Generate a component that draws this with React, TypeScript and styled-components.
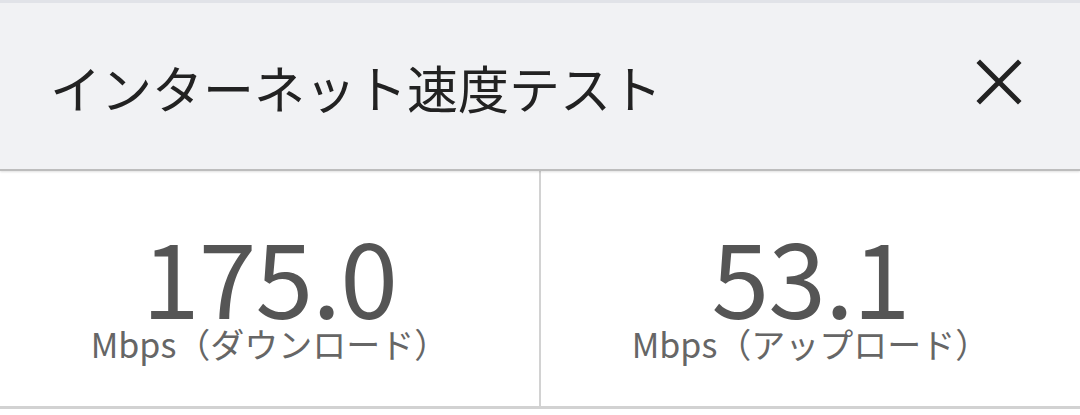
import React from "react";
import styled, { createGlobalStyle } from "styled-components";

const Global = createGlobalStyle`
  html, body { margin: 0; padding: 0; background: #ffffff; }
  body { font-family: "Noto Sans CJK JP", "Noto Sans", sans-serif; }
`;

const Page = styled.div`
  width: 1080px;
  height: 415px;
  background: #ffffff;
  overflow: hidden;
`;

const Header = styled.header`
  box-sizing: border-box;
  height: 171px;
  background: #f1f2f4;
  border-top: 3px solid #e1e3e8;
  border-bottom: 2px solid #bdbdbd;
  box-shadow: 0 1px 2px rgba(0, 0, 0, 0.12);
  display: flex;
  align-items: center;
  justify-content: space-between;
  padding: 0 57px 0 50px;
  position: relative;
  z-index: 1;
`;

const Title = styled.h1`
  margin: 0;
  font-size: 51px;
  font-weight: 400;
  color: #222222;
  line-height: 1;
  padding-top: 2px;
`;

const CloseButton = styled.button`
  border: 0;
  background: transparent;
  padding: 0;
  width: 48px;
  height: 48px;
  display: flex;
  align-items: center;
  justify-content: center;
  cursor: pointer;
  margin-top: -8px;
`;

const Stats = styled.div`
  box-sizing: border-box;
  display: grid;
  grid-template-columns: 541px 1fr;
  height: 238px;
  border-bottom: 3px solid #d2d2d2;
`;

const StatCell = styled.div<{ $divider?: boolean }>`
  box-sizing: border-box;
  display: flex;
  flex-direction: column;
  align-items: center;
  justify-content: center;
  padding-top: 18px;
  border-right: ${(p) => (p.$divider ? "2px solid #d2d2d2" : "none")};
`;

const Value = styled.div`
  font-size: 104px;
  letter-spacing: -1px;
  line-height: 80px;
  color: #555555;
  font-weight: 400;
`;

const Unit = styled.div`
  font-size: 34px;
  line-height: 36px;
  color: #666666;
  margin-top: 12px;
`;

const CloseIcon = () => (
  <svg width="46" height="46" viewBox="0 0 46 46" aria-hidden="true">
    <path d="M4 4 L42 42 M42 4 L4 42" stroke="#222222" strokeWidth="5" strokeLinecap="square" />
  </svg>
);

export default function App() {
  return (
    <Page>
      <Global />
      <Header>
        <Title>インターネット速度テスト</Title>
        <CloseButton aria-label="閉じる">
          <CloseIcon />
        </CloseButton>
      </Header>
      <Stats>
        <StatCell $divider>
          <Value>175.0</Value>
          <Unit>Mbps（ダウンロード）</Unit>
        </StatCell>
        <StatCell>
          <Value>53.1</Value>
          <Unit>Mbps（アップロード）</Unit>
        </StatCell>
      </Stats>
    </Page>
  );
}
